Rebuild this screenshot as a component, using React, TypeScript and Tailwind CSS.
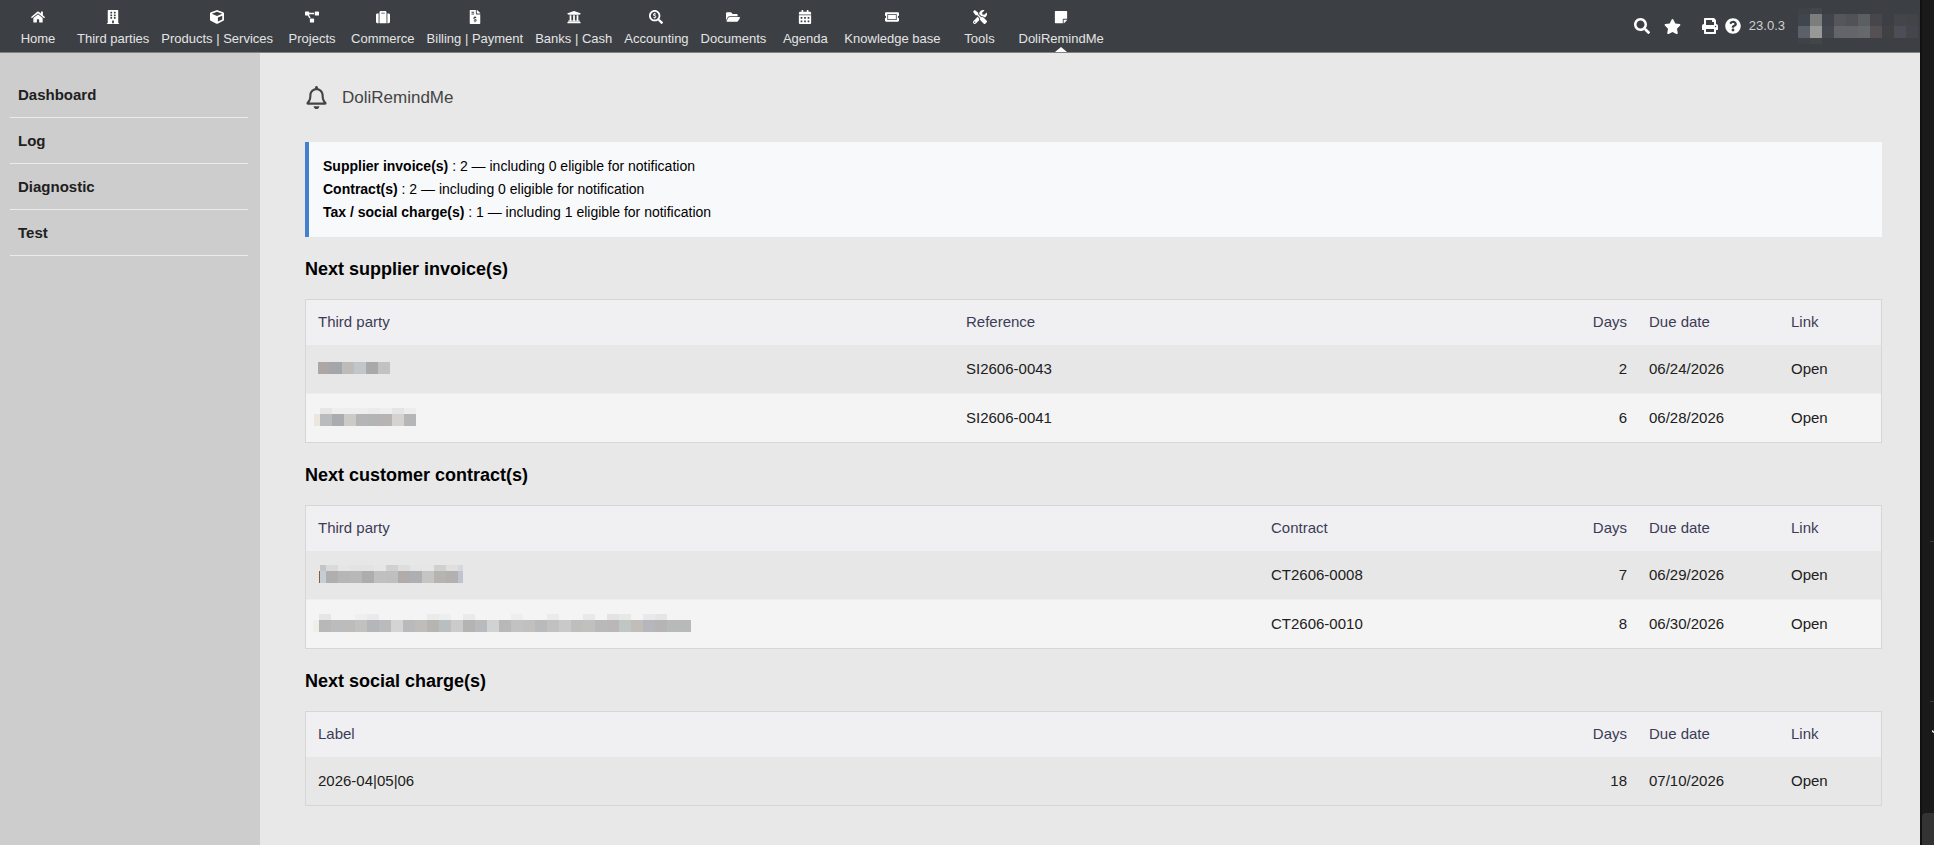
import type { IconType } from "react-icons"
import {
  FaBuilding,
  FaCalendarAlt,
  FaCube,
  FaFileInvoiceDollar,
  FaFolderOpen,
  FaHome,
  FaPrint,
  FaProjectDiagram,
  FaQuestionCircle,
  FaRegBell,
  FaSearch,
  FaSearchDollar,
  FaStar,
  FaStickyNote,
  FaSuitcase,
  FaTicketAlt,
  FaTools,
  FaUniversity,
} from "react-icons/fa"

type Row = { party?: string[][]; label?: string; reference?: string; days: number; due: string }

const menu: { label: string; icon: IconType; active?: boolean }[] = [
  { label: "Home", icon: FaHome },
  { label: "Third parties", icon: FaBuilding },
  { label: "Products | Services", icon: FaCube },
  { label: "Projects", icon: FaProjectDiagram },
  { label: "Commerce", icon: FaSuitcase },
  { label: "Billing | Payment", icon: FaFileInvoiceDollar },
  { label: "Banks | Cash", icon: FaUniversity },
  { label: "Accounting", icon: FaSearchDollar },
  { label: "Documents", icon: FaFolderOpen },
  { label: "Agenda", icon: FaCalendarAlt },
  { label: "Knowledge base", icon: FaTicketAlt },
  { label: "Tools", icon: FaTools },
  { label: "DoliRemindMe", icon: FaStickyNote, active: true },
]

const sideLinks = ["Dashboard", "Log", "Diagnostic", "Test"]

const summary = [
  { name: "Supplier invoice(s)", count: 2, eligible: 0 },
  { name: "Contract(s)", count: 2, eligible: 0 },
  { name: "Tax / social charge(s)", count: 1, eligible: 1 },
]

// Masked names: each entry is [upper half cell, lower cell, width class if not the usual one]
const invoices: Row[] = [
  {
    party: [
      ["", "#aea6a2"], ["", "#a1a7ac"], ["", "#c0bbb8"], ["", "#c2c6c9"], ["", "#a9a9a9"], ["", "#c2c2c3"],
    ],
    reference: "SI2606-0043",
    days: 2,
    due: "06/24/2026",
  },
  {
    party: [
      ["#f4f4f4", "#ebe7de", "w-1.5 -ml-1"],
      ["#e6e6e6", "#babbbd"], ["#eeeeee", "#abacaf"], ["#eeeeee", "#cdcbc8"], ["#eeeeee", "#b5b5b7"],
      ["#ebebeb", "#b3b5b4"], ["#eeeeee", "#b6b5b4"], ["#e5e5e5", "#d6d2cf"], ["#ecedec", "#b4b6b8"],
    ],
    reference: "SI2606-0041",
    days: 6,
    due: "06/28/2026",
  },
]

const contracts: Row[] = [
  {
    party: [
      ["#e7e7e7", "#8a5a3c", "w-px ml-px"], ["#c4c5c6", "#c6cdd6", "w-1.5"],
      ["#d9dadb", "#b0aeaf"], ["#e5e5e5", "#b6b6b5"], ["#e3e3e3", "#b8b8b8"], ["#e3e3e3", "#acadaf"],
      ["#e6e6e6", "#c0c0c0"], ["#d0d0d0", "#bfbfbf"], ["#dedede", "#b1aca9"], ["#e5e5e5", "#acb0b3"],
      ["#e6e6e6", "#c5c5c5"], ["#d0d0cf", "#b5b4b1"], ["#dfdfdc", "#b3b1b0"], ["#d6d7dd", "#c0c2cf", "w-[5px]"],
    ],
    reference: "CT2606-0008",
    days: 7,
    due: "06/29/2026",
  },
  {
    party: [
      ["#f4f4f4", "#efefea", "w-1.5 -ml-[5px]"],
      ["#e6e6e6", "#b8b8b8"], ["", "#babcbe"], ["", "#bdbcba"], ["#efefef", "#c1c1bf"], ["#eaeaea", "#b4b6b9"],
      ["", "#babbbd"], ["", "#d3d4d3"], ["", "#b8babc"], ["", "#bebdbb"], ["#ebebeb", "#b6b5b2"],
      ["#edefef", "#b9bec0"], ["", "#cbcbcb"], ["#eaeaea", "#b5b4b4"], ["", "#b9babd"], ["", "#d0d3d1"],
      ["", "#b8b8b8"], ["#eeeeee", "#c2c2c2"], ["", "#c2c0bf"], ["", "#b8babc"], ["#ebebeb", "#c1c1c1"],
      ["", "#c9c9ca"], ["", "#bfbebc"], ["#e9e9e9", "#c0c0bf"], ["", "#b9b9b9"], ["#e5e2e2", "#bbb6b7"],
      ["#e7e8e8", "#c0c6c4"], ["", "#c2bdb9"], ["#e9e9e9", "#b6b7bd"], ["#e5e5e5", "#b6b5b4"], ["", "#b8b9b9"],
      ["", "#b8b9b9"],
    ],
    reference: "CT2606-0010",
    days: 8,
    due: "06/30/2026",
  },
]

const charges: Row[] = [{ label: "2026-04|05|06", days: 18, due: "07/10/2026" }]

const userMask = [
  ["#3f4348", "#40464d", "#5b6069", "#3f4246"],
  ["#43464a", "#7c7d7d", "#989896", "#434649"],
  ["", "#41454b", "#44484f", ""],
  ["", "#55565a", "#64656a", ""],
  ["", "#515257", "#64656b", ""],
  ["", "#5b5f62", "#65696b", ""],
  ["", "#47474b", "#545054", ""],
  ["", "", "#3f4145", ""],
  ["", "#43454b", "#4c4e57", ""],
  ["", "#434448", "#45464c", ""],
]

function Mask({ cells }: { cells: string[][] }) {
  const twoRows = cells.some((cell) => cell[0])
  return (
    <span className="flex pb-0.5" aria-label="Hidden name">
      {cells.map(([upper, lower, width], i) => (
        <span key={i} className={width || "w-3"}>
          {twoRows && <span className="block h-1.5" style={{ backgroundColor: upper || undefined }} />}
          <span className="block h-3" style={{ backgroundColor: lower }} />
        </span>
      ))}
    </span>
  )
}

function TopBar() {
  return (
    <header className="flex h-[53px] items-stretch justify-between border-b border-[#857f7f] bg-[#3c4045] text-[13px] text-[#e4e4e4]">
      <nav className="flex pl-[5px]">
        {menu.map((item) => (
          <a
            key={item.label}
            href="#"
            className="relative flex min-w-[66px] flex-col items-center px-1.5 pt-2.5 whitespace-nowrap"
          >
            <item.icon className="size-3.5 text-white" />
            <span className="mt-[7px] leading-4">{item.label}</span>
            {item.active && (
              <span className="absolute bottom-0 border-x-[6px] border-b-[5px] border-x-transparent border-b-white" />
            )}
          </a>
        ))}
      </nav>
      <div className="flex items-center text-white">
        <button type="button" aria-label="Search" className="mr-3.5">
          <FaSearch className="size-4" />
        </button>
        <button type="button" aria-label="Bookmarks" className="mr-[21px]">
          <FaStar className="size-[17px]" />
        </button>
        <button type="button" aria-label="Print" className="mr-[7px]">
          <FaPrint className="size-4" />
        </button>
        <button type="button" aria-label="Help" className="mr-2">
          <FaQuestionCircle className="size-4" />
        </button>
        <span className="text-[#cfcfcf]">23.0.3</span>
        <button type="button" aria-label="User account" className="mr-0.5 ml-[13px] flex">
          {userMask.map(([top, upper, lower, bottom], i) => (
            <span key={i} className="w-3">
              <span className="block h-1.5" style={{ backgroundColor: top || undefined }} />
              <span className="block h-3" style={{ backgroundColor: upper || undefined }} />
              <span className="block h-3" style={{ backgroundColor: lower }} />
              <span className="block h-1.5" style={{ backgroundColor: bottom || undefined }} />
            </span>
          ))}
        </button>
      </div>
    </header>
  )
}

function Sidebar() {
  return (
    <aside className="w-[260px] shrink-0 bg-[#cdcdcd] pt-[19px] pr-3 pl-2.5">
      <nav>
        {sideLinks.map((link) => (
          <a
            key={link}
            href="#"
            className="flex h-[46px] items-center border-b border-[#ececec] pt-0.5 pl-2 text-[15px] font-bold text-[#202020]"
          >
            {link}
          </a>
        ))}
      </nav>
    </aside>
  )
}

function Section({
  title,
  firstColumn,
  refColumn,
  refWidth,
  rows,
}: {
  title: string
  firstColumn: string
  refColumn?: string
  refWidth?: string
  rows: Row[]
}) {
  return (
    <section>
      <h2 className="pt-5 pb-[18px] text-[18px] leading-6 font-bold text-black">{title}</h2>
      <div className="border border-[#d6d6d6]">
        <table className="w-full table-fixed border-collapse text-left text-[15px] text-[#202020]">
          <thead>
            <tr className="h-[45px] bg-[#f0f0f3] text-[#3c3c55]">
              <th className="px-3 font-normal">{firstColumn}</th>
              {refColumn && <th className={`px-3 font-normal ${refWidth}`}>{refColumn}</th>}
              <th className="w-20 px-[11px] text-right font-normal">Days</th>
              <th className="w-[142px] px-[11px] font-normal">Due date</th>
              <th className="w-[101px] px-[11px] font-normal">Link</th>
            </tr>
          </thead>
          <tbody>
            {rows.map((row) => (
              <tr key={row.due} className="h-12 odd:bg-[#e7e7e7] even:h-[49px] even:border-t even:border-[#eeeeee] even:bg-[#f4f4f4]">
                <td className="px-3">{row.party ? <Mask cells={row.party} /> : row.label}</td>
                {refColumn && <td className="px-3">{row.reference}</td>}
                <td className="px-[11px] text-right">{row.days}</td>
                <td className="px-[11px]">{row.due}</td>
                <td className="px-[11px]">
                  <a href="#">Open</a>
                </td>
              </tr>
            ))}
          </tbody>
        </table>
      </div>
    </section>
  )
}

// Collapsed dark panel docked on the right edge of the window
function DockedPanel() {
  return (
    <aside className="flex w-3.5 shrink-0 flex-col items-end justify-end border-l-2 border-[#111111] bg-[#1a1a1a]">
      <span className="h-px w-1 bg-[#3a3a3a]" />
      <span className="mt-[159px] h-px w-1 bg-[#3a3a3a]" />
      <svg className="mt-7 h-1 w-0.5" viewBox="0 0 2 4" fill="none" stroke="white">
        <path d="M0 0.5L2 2.5" strokeWidth="1.5" />
      </svg>
      <span className="mt-[79px] h-8 w-full rounded-tl-sm bg-[#333333]" />
    </aside>
  )
}

export default function App() {
  return (
    <div className="flex min-h-screen bg-[#e8e8e8] font-['Liberation_Sans',Arial,sans-serif]">
      <div className="flex min-w-0 flex-1 flex-col">
        <TopBar />
        <div className="flex flex-1">
          <Sidebar />
          <main className="min-w-0 flex-1 pr-[38px] pb-8 pl-[45px]">
            <div className="flex items-center gap-3.5 pt-[33px] pb-[33px] text-[#444444]">
              <FaRegBell className="size-[23px]" />
              <h1 className="text-[17px] leading-5">DoliRemindMe</h1>
            </div>
            <div className="border-l-4 border-[#447fd0] bg-[#f8f9fb] px-3.5 py-[13px] text-[14px] leading-[23px] text-black">
              {summary.map((line) => (
                <p key={line.name}>
                  <strong>{line.name}</strong> : {line.count} — including {line.eligible} eligible for notification
                </p>
              ))}
            </div>
            <Section
              title="Next supplier invoice(s)"
              firstColumn="Third party"
              refColumn="Reference"
              refWidth="w-[604px]"
              rows={invoices}
            />
            <Section
              title="Next customer contract(s)"
              firstColumn="Third party"
              refColumn="Contract"
              refWidth="w-[299px]"
              rows={contracts}
            />
            <Section title="Next social charge(s)" firstColumn="Label" rows={charges} />
          </main>
        </div>
      </div>
      <DockedPanel />
    </div>
  )
}
